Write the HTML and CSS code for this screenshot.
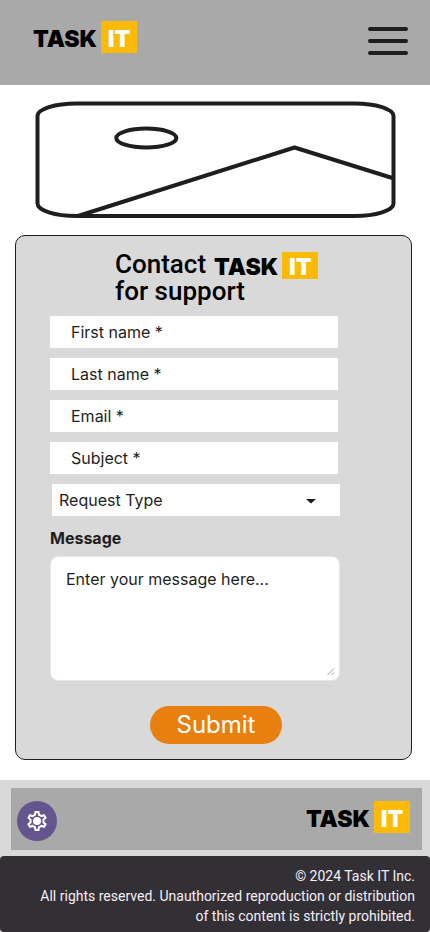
FILE: index.html
```html
<!DOCTYPE html>
<html lang="en">
<head>
  <meta charset="utf-8">
  <meta name="viewport" content="width=device-width, initial-scale=1">
  <title>Task IT - Contact support</title>
  <link rel="stylesheet" href="styles.css">
</head>
<body>
  <header class="site-header">
    <a class="logo" href="#"><span class="logo-task">TASK</span><span class="logo-it">IT</span></a>
    <button class="menu-button" type="button" aria-label="Menu">
      <svg width="40" height="28" viewBox="0 0 40 28" fill="none" stroke="#1e1e1e" stroke-width="4" stroke-linecap="round" aria-hidden="true">
        <path d="M2 2H38M2 14H38M2 26H38"/>
      </svg>
    </button>
  </header>

  <main class="content">
    <svg class="banner" viewBox="0 0 361 117" preserveAspectRatio="none" fill="none" stroke="#1e1e1e" stroke-width="4" stroke-linejoin="round" aria-hidden="true">
      <rect x="2.5" y="2.5" width="356" height="112.500" rx="39" ry="12.500"/>
      <ellipse cx="111.300" cy="37" rx="30" ry="9.500"/>
      <path d="M359 77.500L259.500 46.500L43 115"/>
    </svg>

    <section class="card">
      <h1 class="card-title">
        <span class="title-row">Contact <span class="logo logo-compact"><span class="logo-task">TASK</span><span class="logo-it">IT</span></span></span>
        <span>for support</span>
      </h1>
      <form class="form">
        <input class="field" type="text" placeholder="First name *" aria-label="First name">
        <input class="field" type="text" placeholder="Last name *" aria-label="Last name">
        <input class="field" type="email" placeholder="Email *" aria-label="Email">
        <input class="field" type="text" placeholder="Subject *" aria-label="Subject">
        <div class="select-wrap">
          <select class="select" aria-label="Request Type">
            <option>Request Type</option>
          </select>
          <svg class="select-arrow" width="10" height="5" viewBox="0 0 10 5" aria-hidden="true"><path d="M0 0H10L5 4.500Z" fill="#1d1b20"/></svg>
        </div>
        <label class="message-label" for="message">Message</label>
        <div class="message-wrap">
          <textarea class="message" id="message" placeholder="Enter your message here..."></textarea>
          <svg class="grip" width="8" height="8" viewBox="0 0 8 8" fill="none" stroke="#a0a0a0" aria-hidden="true"><path d="M.5 7L7 .5M4.500 7L7 4.500"/></svg>
        </div>
        <button class="submit" type="submit">Submit</button>
      </form>
    </section>
  </main>

  <footer class="site-footer">
    <div class="footer-bar">
      <button class="settings" type="button" aria-label="Settings">
        <svg width="24" height="24" viewBox="0 0 24 24" fill="#fff" aria-hidden="true">
          <path d="M19.430 12.980c.04-.32.07-.64.07-.98s-.03-.66-.07-.98l2.110-1.650c.19-.15.24-.42.12-.64l-2-3.460c-.12-.22-.39-.3-.61-.22l-2.490 1c-.52-.4-1.080-.73-1.690-.98l-.38-2.650C14.460 2.180 14.250 2 14 2h-4c-.25 0-.46.18-.49.42l-.38 2.650c-.61.25-1.170.59-1.690.98l-2.490-1c-.23-.09-.49 0-.61.22l-2 3.460c-.13.22-.07.49.12.64l2.110 1.650c-.04.32-.07.65-.07.98s.03.66.07.98l-2.110 1.650c-.19.15-.24.42-.12.64l2 3.460c.12.22.39.3.61.22l2.490-1c.52.4 1.080.73 1.690.98l.38 2.650c.03.24.24.42.49.42h4c.25 0 .46-.18.49-.42l.38-2.650c.61-.25 1.170-.59 1.690-.98l2.490 1c.23.09.49 0 .61-.22l2-3.460c.12-.22.07-.49-.12-.64l-2.110-1.650zm-1.980-1.710c.04.31.05.52.05.73s-.02.43-.05.73l-.14 1.130.89.7 1.080.84-.7 1.210-1.270-.51-1.040-.42-.9.680c-.43.32-.84.56-1.250.73l-1.060.43-.16 1.130-.2 1.350h-1.400l-.19-1.350-.16-1.130-1.060-.43c-.43-.18-.83-.41-1.230-.71l-.91-.7-1.060.43-1.270.51-.7-1.210 1.080-.84.89-.7-.14-1.130c-.03-.31-.05-.54-.05-.74s.02-.43.05-.73l.14-1.130-.89-.7-1.080-.84.7-1.210 1.270.51 1.040.42.9-.68c.43-.32.84-.56 1.250-.73l1.060-.43.16-1.130.2-1.350h1.390l.19 1.350.16 1.130 1.060.43c.43.18.83.41 1.230.71l.91.7 1.060-.43 1.270-.51.7 1.210-1.070.85-.89.7.14 1.130z"/>
          <circle cx="12" cy="12" r="4"/>
        </svg>
      </button>
      <a class="logo" href="#"><span class="logo-task">TASK</span><span class="logo-it">IT</span></a>
    </div>
    <p class="legal">© 2024 Task IT Inc.<br>All rights reserved. Unauthorized reproduction or distribution<br>of this content is strictly prohibited.</p>
  </footer>
</body>
</html>
```
FILE: styles.css
```css
* {
  box-sizing: border-box;
}

body {
  margin: 0;
  display: flex;
  flex-direction: column;
  min-height: 100vh;
  background: #fff;
  color: #1e1e1e;
  font-family: Inter, "Liberation Sans", sans-serif;
  font-size: 16px;
}

button {
  padding: 0;
  border: 0;
  background: none;
  cursor: pointer;
}

svg {
  display: block;
}

.site-header {
  display: flex;
  justify-content: space-between;
  align-items: flex-start;
  padding: 21px 22px 30px 33px;
  background: #a9a9a9;
}

.menu-button {
  margin-top: 6px;
}

.logo {
  display: inline-flex;
  gap: 4px;
  color: #000;
  font-family: Inter, "Liberation Sans", sans-serif;
  font-size: 23px;
  font-weight: 900;
  line-height: 28px;
  text-decoration: none;
}

.logo-task,
.logo-it {
  padding-top: 4px;
}

.logo-it {
  width: 36px;
  background: #fbba07;
  color: #fff;
  text-align: center;
}

.logo-compact {
  line-height: 23px;
}

.content {
  flex: 1;
  padding: 16px 18px 20px 15px;
}

.banner {
  width: calc(100% - 36px);
  height: 117px;
  margin: 0 0 17px 20px;
}

.card {
  padding: 16px 73px 15px 34px;
  border: 1px solid #1e1e1e;
  border-radius: 10px;
  background: #d9d9d9;
}

.card-title {
  display: flex;
  flex-direction: column;
  margin: 0 0 12px 65px;
  color: #000;
  font-family: Roboto, "Liberation Sans", sans-serif;
  font-size: 26px;
  font-weight: 500;
  line-height: 25px;
  white-space: nowrap;
}

.title-row {
  display: flex;
  gap: 8px;
}

.form {
  display: flex;
  flex-direction: column;
  gap: 10px;
}

.field,
.select {
  width: 100%;
  height: 32px;
  border: 0;
  border-radius: 0;
  background: #fff;
  color: #1e1e1e;
  font-family: Inter, "Liberation Sans", sans-serif;
  font-size: 16px;
}

.field {
  padding: 0 21px;
}

.field::placeholder,
.message::placeholder {
  color: #1e1e1e;
  opacity: 1;
}

.select-wrap,
.message-wrap {
  position: relative;
  margin-right: -2px;
}

.select-wrap {
  margin-left: 2px;
}

.select {
  display: block;
  padding: 0 7px;
  appearance: none;
}

.select-arrow {
  position: absolute;
  top: 15px;
  right: 24px;
  pointer-events: none;
}

.message-label {
  margin-bottom: -4px;
  font-weight: 700;
  line-height: 24px;
}

.message {
  display: block;
  width: 100%;
  height: 125px;
  padding: 11px 15px;
  border: 1px solid #e6e6e6;
  border-radius: 8px;
  background: #fff;
  color: #1e1e1e;
  font-family: Inter, "Liberation Sans", sans-serif;
  font-size: 16px;
  line-height: 22px;
  resize: none;
}

.grip {
  position: absolute;
  right: 5px;
  bottom: 5px;
}

.submit {
  align-self: center;
  width: 132px;
  height: 38px;
  margin: 15px 0 0 44px;
  padding-bottom: 2px;
  border-radius: 19px;
  background: #e8800f;
  color: #fff;
  font-family: Inter, "Liberation Sans", sans-serif;
  font-size: 24px;
}

.site-footer {
  padding-top: 8px;
  background: #d9d9d9;
}

.footer-bar {
  display: flex;
  justify-content: space-between;
  align-items: flex-start;
  margin: 0 8px 6px 11px;
  padding: 13px 12px 9px 6px;
  background: #a9a9a9;
}

.settings {
  display: grid;
  place-items: center;
  width: 40px;
  height: 40px;
  border-radius: 50%;
  background: #65558f;
}

.legal {
  margin: 0;
  padding: 10px 15px 6px;
  border-radius: 4px;
  background: #322f35;
  color: #f5eff7;
  font-family: Roboto, "Liberation Sans", sans-serif;
  font-size: 14px;
  line-height: 20px;
  text-align: right;
}
```
